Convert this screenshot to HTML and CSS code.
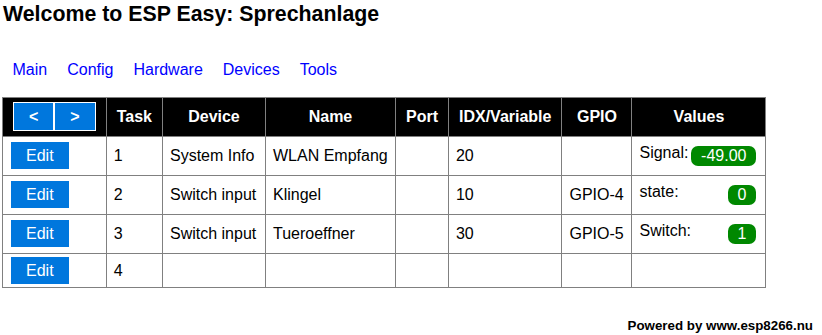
FILE: index.html
```html
<!DOCTYPE html>
<html>
<head>
<meta charset="utf-8">
<title>ESP Easy</title>
<link rel="stylesheet" href="styles.css">
</head>
<body>
<h1 class="title">Welcome to ESP Easy: Sprechanlage</h1>
<nav class="menu">
  <a class="button-menu" href="#">Main</a>
  <a class="button-menu" href="#">Config</a>
  <a class="button-menu" href="#">Hardware</a>
  <a class="button-menu" href="#">Devices</a>
  <a class="button-menu" href="#">Tools</a>
</nav>
<table class="tasks">
  <tr>
    <th><a class="button-link" href="#">&lt;</a><a class="button-link" href="#">&gt;</a></th>
    <th>Task</th>
    <th class="col-device">Device</th>
    <th class="col-name">Name</th>
    <th>Port</th>
    <th>IDX/Variable</th>
    <th class="col-gpio">GPIO</th>
    <th class="col-values">Values</th>
  </tr>
  <tr>
    <td><a class="button-link" href="#">Edit</a></td>
    <td>1</td>
    <td>System Info</td>
    <td>WLAN Empfang</td>
    <td></td>
    <td>20</td>
    <td></td>
    <td><div class="div_l">Signal:</div><div class="div_r">-49.00</div><div class="div_br"></div></td>
  </tr>
  <tr>
    <td><a class="button-link" href="#">Edit</a></td>
    <td>2</td>
    <td>Switch input</td>
    <td>Klingel</td>
    <td></td>
    <td>10</td>
    <td>GPIO-4</td>
    <td><div class="div_l">state:</div><div class="div_r">0</div><div class="div_br"></div></td>
  </tr>
  <tr>
    <td><a class="button-link" href="#">Edit</a></td>
    <td>3</td>
    <td>Switch input</td>
    <td>Tueroeffner</td>
    <td></td>
    <td>30</td>
    <td>GPIO-5</td>
    <td><div class="div_l">Switch:</div><div class="div_r">1</div><div class="div_br"></div></td>
  </tr>
  <tr class="row-empty">
    <td><a class="button-link" href="#">Edit</a></td>
    <td>4</td>
    <td></td>
    <td></td>
    <td></td>
    <td></td>
    <td></td>
    <td></td>
  </tr>
</table>
<h6 class="footer">Powered by www.esp8266.nu</h6>
</body>
</html>
```

FILE: styles.css
```css
html, body {
  background: #ffffff;
}
body {
  margin: 0;
  padding: 2px 9px 0 2px;
  font-family: "Liberation Sans", Arial, sans-serif;
  font-size: 16px;
  color: black;
}
.title {
  font-size: 21.333px;
  font-weight: bold;
  margin: 0 0 0 1px;
  color: black;
}
.menu {
  display: flex;
  gap: 20px;
  margin-top: 34px;
  padding-left: 10.5px;
}
.button-menu {
  color: #0000ff;
  text-decoration: none;
  background: #ffffff;
}
.tasks {
  margin-top: 18px;
  border-collapse: collapse;
  border: 1px solid #808080;
  color: black;
}
.tasks th {
  padding: 10px;
  background-color: black;
  color: #ffffff;
  border: 1px solid #808080;
  font-weight: bold;
  white-space: nowrap;
}
.tasks td {
  padding: 7px;
  border: 1px solid #808080;
  white-space: nowrap;
}
.tasks .col-device {
  width: 82px;
}
.tasks .col-name {
  width: 109px;
}
.tasks .col-gpio {
  width: 49px;
}
.tasks .col-values {
  width: 113px;
}
.row-empty td {
  height: 19px;
}
.button-link {
  padding: 5px 15px;
  background-color: #0077dd;
  color: #ffffff;
  border: solid 1px #ffffff;
  text-decoration: none;
}
.div_l {
  float: left;
}
.div_r {
  float: right;
  margin: 2px;
  padding: 1px 10px;
  border-radius: 7px;
  background-color: #008800;
  color: white;
}
.div_br {
  clear: both;
}
.footer {
  font-size: 13.333px;
  font-weight: bold;
  text-align: right;
  margin: 30px 0 0 0;
  color: black;
}
```
